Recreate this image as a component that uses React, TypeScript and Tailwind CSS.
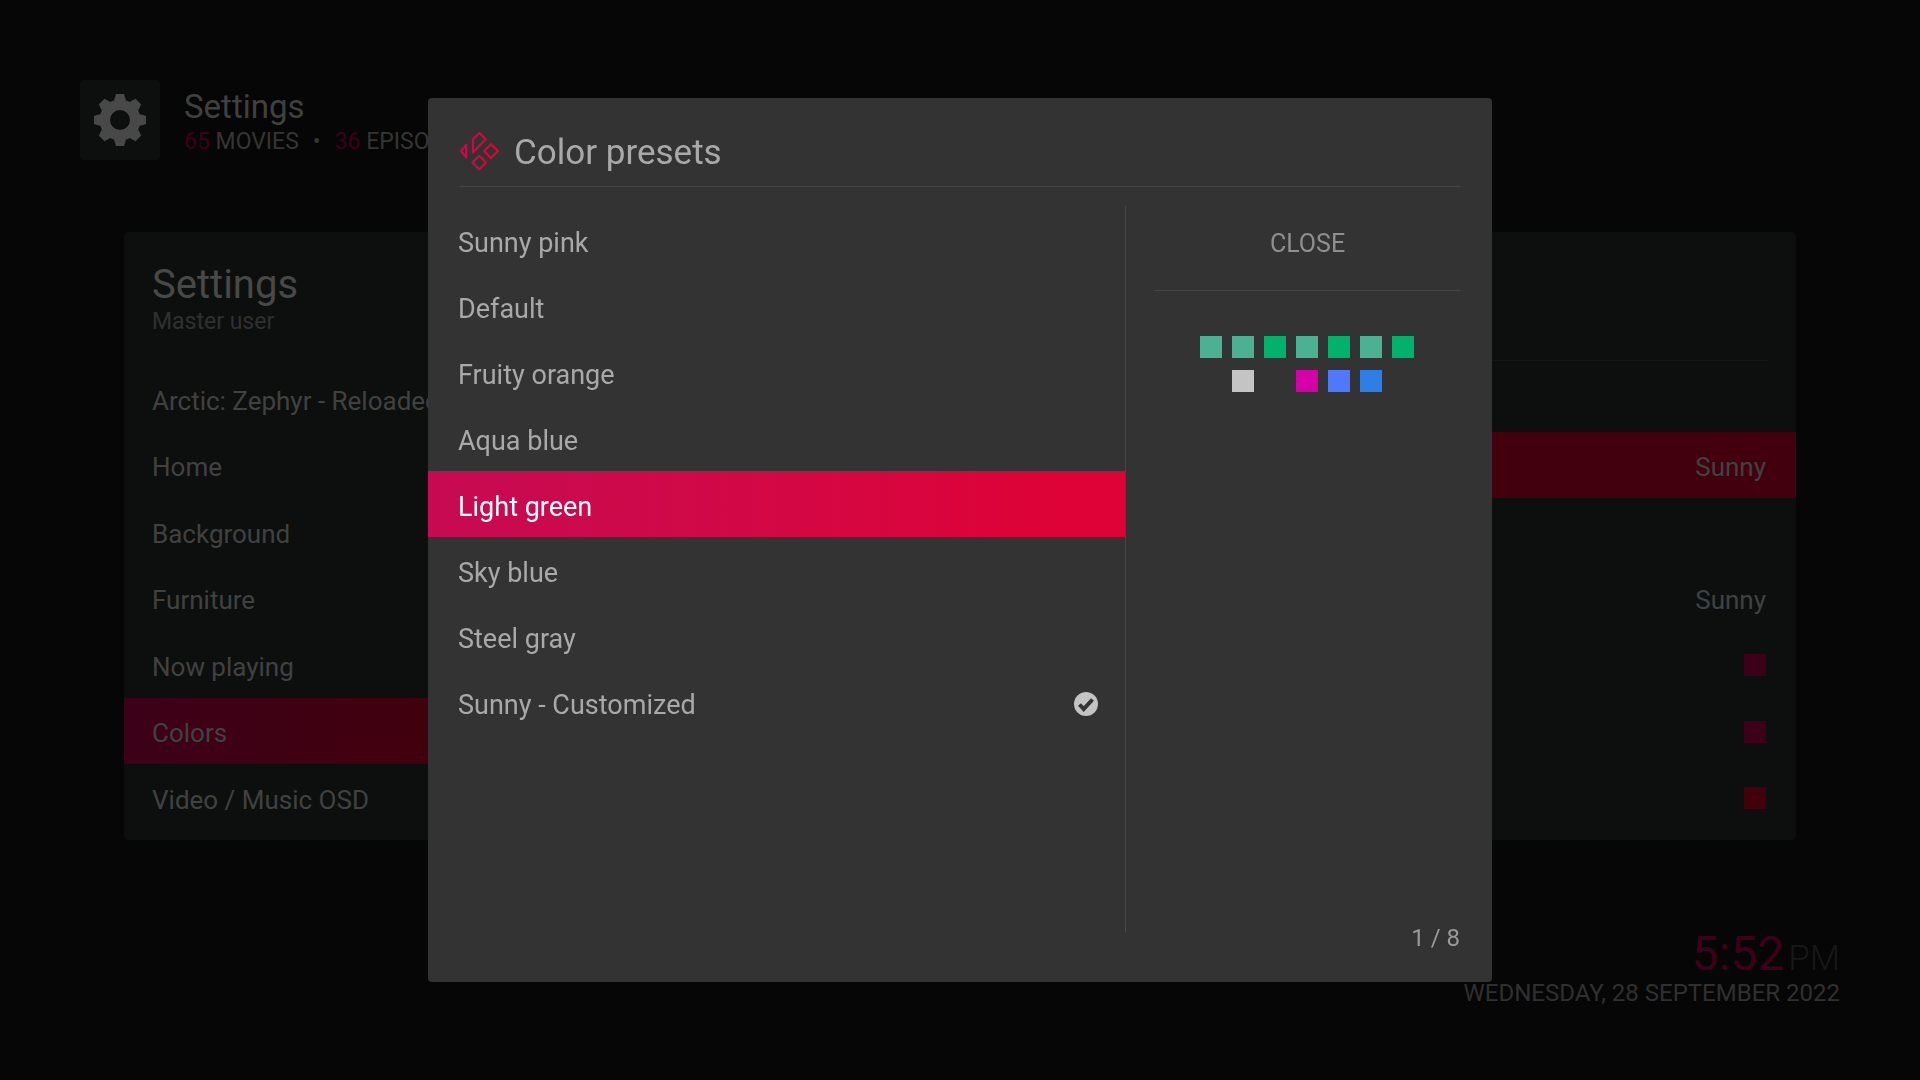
import clsx from "clsx";

const menu = ["Arctic: Zephyr - Reloaded", "Home", "Background", "Furniture", "Now playing", "Colors", "Video / Music OSD"];

const options = [
  { id: 1 },
  { id: 2, value: "Sunny", active: true },
  { id: 3 },
  { id: 4, value: "Sunny" },
  { id: 5, swatch: "bg-[#3c0018]" },
  { id: 6, swatch: "bg-[#3c0018]" },
  { id: 7, swatch: "bg-[#42000d]" },
];

const presets = ["Sunny pink", "Default", "Fruity orange", "Aqua blue", "Light green", "Sky blue", "Steel gray", "Sunny - Customized"];

const swatches = [
  ["bg-[#4bb193]", "bg-[#4bb193]", "bg-[#00b26c]", "bg-[#4bb193]", "bg-[#00b26c]", "bg-[#4bb193]", "bg-[#00b26c]"],
  ["", "bg-[#c4c4c4]", "", "bg-[#d600ab]", "bg-[#5078ff]", "bg-[#2d7ee6]", ""],
];

function Gear() {
  return (
    <svg viewBox="-26 -26 52 52" className="w-[52px] h-[52px] text-[#484848]" aria-hidden="true">
      <circle r="15.25" fill="none" stroke="currentColor" strokeWidth="10.5" />
      {[0, 45, 90, 135, 180, 225, 270, 315].map((deg) => (
        <path key={deg} d="M-4-26h8l2 6.5h-12z" fill="currentColor" transform={`rotate(${deg})`} />
      ))}
    </svg>
  );
}

function KodiLogo() {
  return (
    <svg viewBox="0 0 40 40" className="w-10 h-10" aria-hidden="true">
      <defs>
        <linearGradient id="kodi" gradientUnits="userSpaceOnUse" x1="0" y1="0" x2="40" y2="0">
          <stop offset="0" stopColor="#c60a52" />
          <stop offset="0.8" stopColor="#de0236" />
        </linearGradient>
      </defs>
      <g fill="none" stroke="url(#kodi)" strokeWidth="2.2" strokeLinejoin="round">
        <path d="M6.2 14v12.4L1 20z" />
        <path d="M19.3 2l6.5 6.2L13 21.5V8.2z" />
        <path d="M31 13.2l7 6.8-7 7-6.8-7z" />
        <path d="M19.3 24.8l6.8 6.7-6.8 6.8-6.8-6.8z" />
      </g>
    </svg>
  );
}

function CheckBadge() {
  return (
    <svg viewBox="0 0 24 24" className="w-6 h-6" aria-hidden="true">
      <circle cx="12" cy="12" r="12" fill="#c4c4c4" />
      <path d="M5.5 12.5l4.2 4.5 8.8-9.5" fill="none" stroke="#333" strokeWidth="4" />
    </svg>
  );
}

function SettingsPanel() {
  return (
    <main className="flex-1 flex mt-[72px] ml-11 rounded bg-[#0d0f0e] text-[26px] text-[#414141]">
      <nav className="w-[500px] flex flex-col pt-7 pb-[10px]">
        <h2 className="px-7 text-[40px] leading-[50px] text-[#484848]">Settings</h2>
        <p className="px-7 text-[23px] leading-6 text-[#303030]">Master user</p>
        <div className="flex-1 flex flex-col justify-between mt-[31px]">
          {menu.map((item) => (
            <button
              key={item}
              className={clsx(
                "h-[66px] px-7 pt-1.5 text-left whitespace-nowrap",
                item === "Colors" && "bg-linear-to-r from-[#3c0018] to-[#42000d] to-65%"
              )}
            >
              {item}
            </button>
          ))}
        </div>
      </nav>
      <section className="flex-1 flex flex-col pb-[10px]">
        <div className="h-[129px] mx-7 border-b border-[#141616]" />
        <div className="flex-1 flex flex-col justify-between mt-1">
          {options.map((o) => (
            <div
              key={o.id}
              className={clsx(
                "h-[66px] pl-7 pr-[30px] flex items-center justify-end",
                o.value ? "pt-1.5" : "pt-0.5",
                o.active && "bg-[#42000f]"
              )}
            >
              {o.value}
              {o.swatch && <span className={clsx("w-[22px] h-[22px]", o.swatch)} />}
            </div>
          ))}
        </div>
      </section>
    </main>
  );
}

function PresetDialog() {
  return (
    <div className="fixed inset-0 flex justify-center py-[98px]">
      <div role="dialog" aria-labelledby="dialog-title" className="w-full max-w-[1064px] flex flex-col rounded bg-[#333] text-[#a9a9a9]">
        <header className="h-[89px] mx-8 pt-[18px] flex items-center gap-[14px] border-b border-[#454545]">
          <KodiLogo />
          <h1 id="dialog-title" className="pt-1 text-[35px]">Color presets</h1>
        </header>
        <div className="flex-1 flex">
          <div className="flex-1 flex flex-col pt-5 mb-[50px]">
            {presets.map((name) => (
              <button
                key={name}
                className={clsx(
                  "h-[66px] pl-[30px] pr-[27px] pt-1 flex items-center justify-between text-[27px]",
                  name === "Light green" && "bg-linear-to-r from-[#c60a52] to-[#de0236] to-90% text-white"
                )}
              >
                <span className="pt-0.5">{name}</span>
                {name === "Sunny - Customized" && <CheckBadge />}
              </button>
            ))}
          </div>
          <div className="w-px mt-[19px] mb-[50px] bg-[#454545]" />
          <aside className="w-[366px] pl-[29px] pr-8 pt-5 pb-7 flex flex-col">
            <button className="h-[84px] pb-[10px] border-b border-[#454545] text-[25px] text-[#8f8f8f]">CLOSE</button>
            <div className="mt-[45px] mr-[2px] flex flex-col items-center gap-3">
              {swatches.map((row, i) => (
                <div key={i} className="flex gap-[10px]">
                  {row.map((color, j) => (
                    <span key={j} className={clsx("w-[22px] h-[22px]", color)} />
                  ))}
                </div>
              ))}
            </div>
            <p className="mt-auto text-right text-2xl text-[#9a9a9a]">1 / 8</p>
          </aside>
        </div>
      </div>
    </div>
  );
}

export default function App() {
  return (
    <div className="min-h-screen flex flex-col px-20 pt-20 pb-[71px] bg-[#060606] font-['Roboto',sans-serif]">
      <header className="flex gap-6">
        <div className="w-20 h-20 flex items-center justify-center rounded bg-[#0d0f0e]">
          <Gear />
        </div>
        <div className="pt-[6px]">
          <p className="text-[33px] leading-[42px] text-[#404040]">Settings</p>
          <p className="text-[23px] leading-7 text-[#353535] flex gap-[14px]">
            <span><span className="text-[#3c0018]">65</span> MOVIES</span>
            <span>•</span>
            <span><span className="text-[#3c0018]">36</span> EPISODES</span>
          </p>
        </div>
      </header>
      <div className="flex-1 flex flex-col pr-11">
        <SettingsPanel />
      </div>
      <footer className="mt-[91px] text-right">
        <p className="flex items-baseline justify-end gap-1 text-5xl leading-[46px] text-[#3c0018]">
          <span>5:52</span>
          <span className="text-[35px] leading-6 font-light text-[#181818]">PM</span>
        </p>
        <p className="text-2xl leading-8 text-[#303030]">WEDNESDAY, 28 SEPTEMBER 2022</p>
      </footer>
      <PresetDialog />
    </div>
  );
}
